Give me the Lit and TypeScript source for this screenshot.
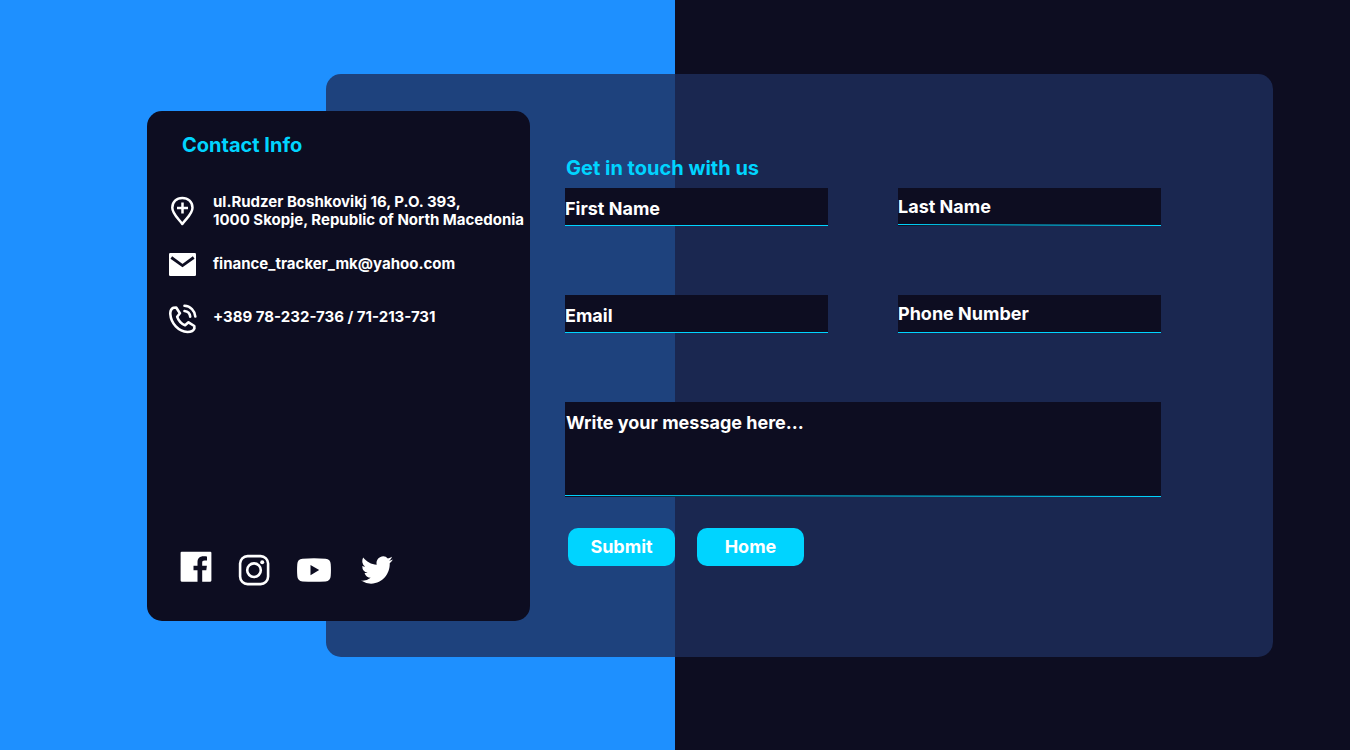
import { LitElement, html, css, svg } from "lit";
import { customElement } from "lit/decorators.js";

const pinIcon = svg`
  <svg class="icon" width="27" height="30" viewBox="0 0 27 30" aria-hidden="true">
    <path d="M13.300 1.900C7.500 1.900 3.300 6.100 3.300 11.700C3.300 17.800 9.500 22.600 13.300 28C17.100 22.600 23.500 17.800 23.500 11.700C23.500 6.100 19.200 1.900 13.300 1.900Z" fill="none" stroke="#fff" stroke-width="2.500" stroke-linejoin="round"/>
    <path d="M13.500 6.500V17.500M8 12H19" stroke="#fff" stroke-width="2.500"/>
  </svg>`;

const mailIcon = svg`
  <svg class="icon" width="27" height="24" viewBox="0 -1 27 24" aria-hidden="true">
    <rect width="27" height="23" rx="1.200" fill="#fff"/>
    <path d="M2.300 4.500L13.500 12.600L24.700 4.500" fill="none" stroke="#0d0d21" stroke-width="2.800"/>
  </svg>`;

const phoneIcon = svg`
  <svg class="icon" width="28" height="33" viewBox="0 -3 28 33" aria-hidden="true" fill="none" stroke="#fff" stroke-width="2.600" stroke-linejoin="round" stroke-linecap="round">
    <path d="M7.200 3.500L4.400 3.700C2.200 4.600 1.200 7 1.300 10C2 19.500 9.500 27.500 18.500 28C21.500 28 24.600 26.600 25.400 24.600L25.300 22L19.500 18.300L16.100 21.300C12.500 19.800 9.500 16.600 8.200 12.800L10.900 9.300L7.200 3.500Z"/>
    <path d="M15.500 1.800C21.500 2.200 25.800 6.600 26.300 12.500M15.500 7C18.700 7.300 20.900 9.500 21.200 12.700"/>
  </svg>`;

const facebookIcon = svg`
  <svg width="32" height="38" viewBox="0 0 32 38" aria-hidden="true">
    <path fill="#fff" d="M1.700 .7H30.300Q31.400 .7 31.400 1.800V29.600Q31.400 30.700 30.300 30.700H22.200V19.200H26.300L26.900 14.700H22.200V11.700C22.200 10.200 22.700 9.400 24.600 9.400H27V5.400C26.500 5.300 25 5.200 23.400 5.200C19.900 5.200 17.500 7.300 17.500 11.100V14.700H13.500V19.200H17.500V30.700H1.700Q.6 30.700 .6 29.600V1.800Q.6 .7 1.700 .7Z"/>
  </svg>`;

const instagramIcon = svg`
  <svg width="32" height="32" viewBox="0 0 32 32" aria-hidden="true">
    <rect x="2.100" y="2.100" width="28" height="28" rx="7.500" fill="none" stroke="#fff" stroke-width="2.600"/>
    <circle cx="16" cy="16.200" r="6.800" fill="none" stroke="#fff" stroke-width="2.600"/>
    <circle cx="24.200" cy="8.300" r="2" fill="#fff"/>
  </svg>`;

const youtubeIcon = svg`
  <svg width="39" height="24" viewBox="0 0 39 24" aria-hidden="true">
    <path fill="#fff" fill-rule="evenodd" d="M6.500 .7Q18 -.3 29.500 .7Q34.500 1.200 34.700 6Q35.200 12 34.700 18Q34.500 23 29.500 23.400Q18 24.300 6.500 23.400Q1.500 23 1.300 18Q.8 12 1.300 6Q1.500 1.200 6.500 .7ZM14.500 7V17.200L23.200 12.100Z"/>
  </svg>`;

const twitterIcon = svg`
  <svg width="32" height="28" viewBox="0 0 24 20" preserveAspectRatio="none" aria-hidden="true">
    <path fill="#fff" d="M23.950 2.570a10 10 0 0 1-2.830.780 4.960 4.960 0 0 0 2.170-2.730c-.950.560-2 .960-3.130 1.190a4.920 4.920 0 0 0-8.380 4.480C7.690 6.090 4.070 4.120 1.640 1.150a4.920 4.920 0 0 0 1.520 6.570 4.900 4.900 0 0 1-2.230-.610v.060a4.920 4.920 0 0 0 3.950 4.830 5 5 0 0 1-2.210.080 4.940 4.940 0 0 0 4.600 3.420A9.870 9.870 0 0 1 0 17.540a14 14 0 0 0 7.550 2.210c9.050 0 14-7.500 14-13.980 0-.210 0-.420-.020-.630a9.940 9.940 0 0 0 2.420-2.570Z"/>
  </svg>`;

@customElement("app-root")
export class AppRoot extends LitElement {
  static styles = css`
    :host {
      --ink: #0d0d21;
      --accent: #00d4ff;
      display: block;
      font-family: Inter, "Liberation Sans", sans-serif;
      font-weight: 700;
      color: #fff;
    }
    * {
      box-sizing: border-box;
    }
    .page {
      min-height: 100vh;
      display: grid;
      grid-template-columns: 179px 204px 1fr;
      align-content: start;
      padding: 74px 77px 74px 147px;
      background: linear-gradient(90deg, #1e90ff 50%, var(--ink) 50%);
    }
    .panel {
      grid-area: 1 / 2 / 2 / 4;
      min-height: 583px;
      padding: 82px 112px 82px 239px;
      border-radius: 15px;
      background: rgba(30, 46, 92, 0.8);
    }
    .card {
      grid-area: 1 / 1 / 2 / 3;
      z-index: 1;
      margin: 37px 0 36px;
      padding: 22px 0 32px;
      display: flex;
      flex-direction: column;
      justify-content: space-between;
      border-radius: 15px;
      background: var(--ink);
    }
    h1,
    h2 {
      margin: 0;
      font-size: 20px;
      line-height: 24px;
      font-weight: 700;
      color: var(--accent);
    }
    .card h2 {
      padding-left: 35px;
    }
    .contacts {
      margin: 36px 0 0;
      padding: 0 0 0 22px;
      list-style: none;
      font-size: 15px;
      line-height: 18px;
    }
    .contact {
      display: grid;
      grid-template-columns: 28px 1fr;
      align-items: center;
      column-gap: 16px;
      min-height: 36px;
      margin-bottom: 17px;
      white-space: nowrap;
    }
    .contact a {
      color: inherit;
      text-decoration: none;
    }
    .icon {
      display: block;
    }
    .social {
      display: flex;
      align-items: center;
      gap: 26px;
      padding-left: 33px;
    }
    .social a {
      display: block;
    }
    .social svg {
      display: block;
    }
    .fields {
      display: grid;
      grid-template-columns: 1fr 1fr;
      gap: 69px 70px;
      margin-top: 8px;
    }
    .panel h1 {
      padding-left: 1px;
    }
    .field {
      display: block;
      width: 100%;
      height: 38px;
      margin: 0;
      padding: 3px 0 0;
      border: 0;
      border-bottom: 1px solid var(--accent);
      border-radius: 0;
      outline: 0;
      background: var(--ink);
      color: #fff;
      font: 700 18px/22px Inter, "Liberation Sans", sans-serif;
    }
    .field::placeholder {
      color: #fff;
      opacity: 1;
    }
    .end {
      padding: 0;
    }
    .sloped {
      padding-bottom: 2px;
      border-bottom: 0;
      background:
        linear-gradient(90deg, transparent, var(--accent)) 0 100% / 100% 1px no-repeat,
        linear-gradient(90deg, var(--accent), transparent) 0 calc(100% - 1px) / 100% 1px no-repeat,
        var(--ink);
    }
    .message {
      grid-column: 1 / -1;
      height: 95px;
      padding: 10px 0 0 1px;
      resize: none;
    }
    .actions {
      display: flex;
      gap: 22px;
      margin: 31px 0 0 3px;
    }
    .button {
      width: 107px;
      height: 38px;
      padding: 0;
      border: 0;
      border-radius: 10px;
      background: var(--accent);
      color: #fff;
      font: 700 18px/38px Inter, "Liberation Sans", sans-serif;
      text-align: center;
      text-decoration: none;
      cursor: pointer;
    }
  `;

  render() {
    return html`
      <main class="page">
        <aside class="card">
          <div>
            <h2>Contact Info</h2>
            <ul class="contacts">
              <li class="contact">${pinIcon}<span>ul.Rudzer Boshkovikj 16, P.O. 393,<br />1000 Skopje, Republic of North Macedonia</span></li>
              <li class="contact">${mailIcon}<a href="mailto:finance_tracker_mk@yahoo.com">finance_tracker_mk@yahoo.com</a></li>
              <li class="contact">${phoneIcon}<span>+389 78-232-736 / 71-213-731</span></li>
            </ul>
          </div>
          <nav class="social" aria-label="Social media">
            <a href="#facebook" aria-label="Facebook">${facebookIcon}</a>
            <a href="#instagram" aria-label="Instagram">${instagramIcon}</a>
            <a href="#youtube" aria-label="YouTube">${youtubeIcon}</a>
            <a href="#twitter" aria-label="Twitter">${twitterIcon}</a>
          </nav>
        </aside>
        <form class="panel" @submit=${(e: Event) => e.preventDefault()}>
          <h1>Get in touch with us</h1>
          <div class="fields">
            <input class="field" type="text" name="firstName" placeholder="First Name" aria-label="First Name" />
            <input class="field end sloped" type="text" name="lastName" placeholder="Last Name" aria-label="Last Name" />
            <input class="field" type="email" name="email" placeholder="Email" aria-label="Email" />
            <input class="field end" type="tel" name="phone" placeholder="Phone Number" aria-label="Phone Number" />
            <textarea class="field message sloped" name="message" placeholder="Write your message here..." aria-label="Message"></textarea>
          </div>
          <div class="actions">
            <button class="button" type="submit">Submit</button>
            <a class="button" href="#home">Home</a>
          </div>
        </form>
      </main>
    `;
  }
}
